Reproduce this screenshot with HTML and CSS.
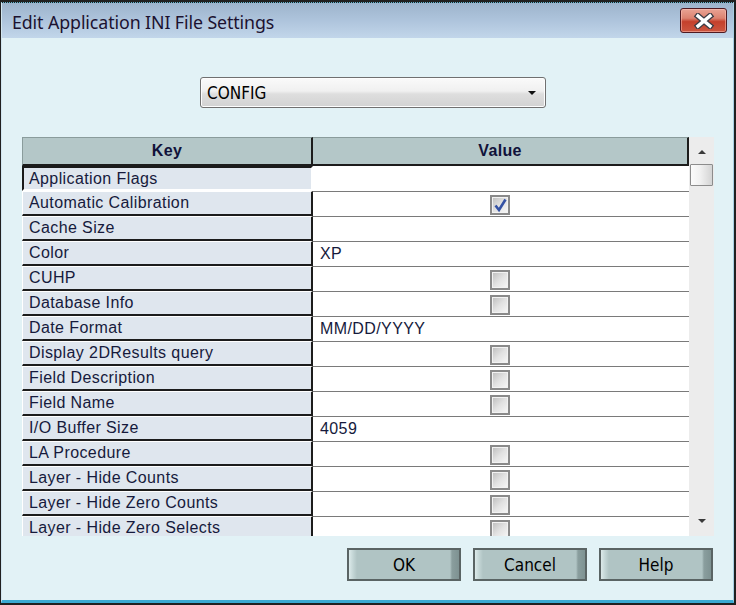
FILE: index.html
```html
<!DOCTYPE html>
<html>
<head>
<meta charset="utf-8">
<title>Edit Application INI File Settings</title>
<link rel="stylesheet" href="styles.css">
</head>
<body>
<div class="window">
  <div class="frame">
    <div class="titlebar">
      <span class="title">Edit Application INI File Settings</span>
      <div class="close">
        <svg width="22" height="16" viewBox="0 0 22 16">
          <path d="M5 3 L17 13 M17 3 L5 13" stroke="#3c3c44" stroke-width="6" stroke-linecap="square" fill="none"/>
          <path d="M5 3 L17 13 M17 3 L5 13" stroke="#ffffff" stroke-width="3.4" stroke-linecap="square" fill="none"/>
        </svg>
      </div>
    </div>
    <div class="client">
      <div class="combo-row">
        <div class="combo"><span class="combo-text">CONFIG</span><span class="combo-arrow"></span></div>
      </div>
      <div class="grid">
        <div class="grid-main">
          <div class="row head"><div class="k">Key</div><div class="v">Value</div></div>
          <div class="row first"><div class="k">Application Flags</div><div class="v"></div></div>
          <div class="row"><div class="k">Automatic Calibration</div><div class="v center"><span class="cb"><svg width="16" height="16" viewBox="0 0 16 16"><path d="M3.5 8.5 L7 13 L13.5 2.5" stroke="#3452a4" stroke-width="2.6" fill="none"/></svg></span></div></div>
          <div class="row"><div class="k">Cache Size</div><div class="v"></div></div>
          <div class="row"><div class="k">Color</div><div class="v">XP</div></div>
          <div class="row"><div class="k">CUHP</div><div class="v center"><span class="cb"></span></div></div>
          <div class="row"><div class="k">Database Info</div><div class="v center"><span class="cb"></span></div></div>
          <div class="row"><div class="k">Date Format</div><div class="v">MM/DD/YYYY</div></div>
          <div class="row"><div class="k">Display 2DResults query</div><div class="v center"><span class="cb"></span></div></div>
          <div class="row"><div class="k">Field Description</div><div class="v center"><span class="cb"></span></div></div>
          <div class="row"><div class="k">Field Name</div><div class="v center"><span class="cb"></span></div></div>
          <div class="row"><div class="k">I/O Buffer Size</div><div class="v">4059</div></div>
          <div class="row"><div class="k">LA Procedure</div><div class="v center"><span class="cb"></span></div></div>
          <div class="row"><div class="k">Layer - Hide Counts</div><div class="v center"><span class="cb"></span></div></div>
          <div class="row"><div class="k">Layer - Hide Zero Counts</div><div class="v center"><span class="cb"></span></div></div>
          <div class="row"><div class="k">Layer - Hide Zero Selects</div><div class="v center"><span class="cb"></span></div></div>
        </div>
        <div class="scrollbar">
          <div class="sb-btn"><span class="tri-up"></span></div>
          <div class="sb-thumb"></div>
          <div class="sb-track"></div>
          <div class="sb-btn bottom"><span class="tri-down"></span></div>
        </div>
      </div>
      <div class="buttons">
        <div class="btn">OK</div>
        <div class="btn">Cancel</div>
        <div class="btn">Help</div>
      </div>
    </div>
  </div>
</div>
</body>
</html>
```
FILE: styles.css
```css
html, body {
  margin: 0;
  padding: 0;
  background: #1e1e1e;
}
.window {
  width: 736px;
  height: 605px;
  box-sizing: border-box;
  padding: 2px 2px 2px 1px;
  background: #202020;
}
.frame {
  height: 100%;
  box-sizing: border-box;
  display: flex;
  flex-direction: column;
  border-left: 1px solid #d2e6f0;
  border-top: 1px dotted #62b8d2;
  border-right: 1px solid #a6cfe2;
  border-bottom: 3px solid #3aa9d2;
}
.titlebar {
  height: 35px;
  flex: none;
  display: flex;
  justify-content: space-between;
  align-items: flex-start;
  padding: 5px 6px 0 10px;
  box-sizing: border-box;
  background: linear-gradient(to bottom, #9db4cc 0%, #aec4dc 50%, #c2d6ea 100%);
}
.title {
  font-family: "Noto Sans", "Open Sans", sans-serif;
  font-size: 17.8px;
  line-height: 22px;
  padding-top: 3px;
  color: #1c1230;
  letter-spacing: -0.1px;
}
.close {
  width: 47px;
  height: 25px;
  box-sizing: border-box;
  border: 1px solid #4e1a22;
  border-radius: 3px;
  background: linear-gradient(to bottom, #e9a394 0%, #dc8270 40%, #c4402c 55%, #cc5640 100%);
  box-shadow: inset 0 0 0 1px rgba(255,200,190,0.5);
  display: flex;
  align-items: center;
  justify-content: center;
}
.close svg { display: block; }
.client {
  flex: 1;
  background: #e2f2f6;
  padding: 39px 19px 0 20px;
  display: flex;
  flex-direction: column;
}
.combo-row {
  display: flex;
  padding-left: 178px;
}
.combo {
  width: 346px;
  height: 31px;
  box-sizing: border-box;
  border: 1px solid #707070;
  border-radius: 3px;
  background: linear-gradient(to bottom, #fafafa 0%, #f0f0f0 45%, #dedede 55%, #d2d2d2 100%);
  box-shadow: inset 0 0 0 1px #fdfdfd;
  display: flex;
  align-items: center;
  justify-content: space-between;
  padding: 0 9px 0 6px;
}
.combo-text, .btn {
  font-family: "DejaVu Sans Condensed", "DejaVu Sans", sans-serif;
  font-stretch: condensed;
  font-size: 17px;
  color: #000;
}
.combo-arrow {
  width: 0;
  height: 0;
  border-left: 4px solid transparent;
  border-right: 4px solid transparent;
  border-top: 4px solid #111;
}
.grid {
  margin-top: 29px;
  height: 399px;
  display: flex;
  overflow: hidden;
  flex: none;
}
.grid-main {
  width: 667px;
  height: 399px;
  overflow: hidden;
  background: #ffffff;
}
.row {
  display: flex;
  height: 25px;
  font-family: "Liberation Sans", Arial, sans-serif;
  font-size: 16px;
  letter-spacing: 0.4px;
  color: #161a3c;
}
.row .k {
  width: 291px;
  box-sizing: border-box;
  background: #dfe6ee;
  border-top: 1px solid #ffffff;
  border-left: 1px solid #ffffff;
  border-right: 2px solid #1c1c1c;
  border-bottom: 2px solid #1c1c1c;
  padding-left: 6px;
  display: flex;
  align-items: center;
  white-space: nowrap;
}
.row .v {
  width: 376px;
  box-sizing: border-box;
  border-top: 1px solid #7a7a7a;
  padding-left: 7px;
  display: flex;
  align-items: center;
  white-space: nowrap;
}
.row .v.center {
  justify-content: center;
  align-items: flex-start;
  padding: 3px 2px 0 0;
}
.row.first .k {
  border-top: 2px solid #1a1a1a;
  border-left: 2px solid #1a1a1a;
  border-right: 2px solid #ffffff;
  border-bottom: 2px solid #ffffff;
  padding-left: 5px;
}
.row.first .v {
  border-top: none;
}
.row.head {
  height: 29px;
  font-weight: bold;
  font-size: 16px;
  letter-spacing: 0.3px;
  color: #10123a;
}
.row.head .k, .row.head .v {
  background: #b4c7c8;
  border-top: 1px solid #8a9c9c;
  border-bottom: 2px solid #1c1c1c;
  border-right: 2px solid #1c1c1c;
  justify-content: center;
  padding: 0;
}
.row.head .k {
  border-left: 1px solid #8a9c9c;
}
.cb {
  width: 20px;
  height: 20px;
  box-sizing: border-box;
  border: 2px solid #8a8a8a;
  box-shadow: inset 0 0 0 1px #f2f2f2;
  background: linear-gradient(135deg, #bcbcbc 0%, #e2e2e2 50%, #f8f8f8 100%);
  display: flex;
  align-items: center;
  justify-content: center;
}
.cb svg { display: block; }
.scrollbar {
  width: 25px;
  height: 399px;
  background: #ececec;
  display: flex;
  flex-direction: column;
  align-items: center;
}
.sb-btn {
  height: 27px;
  width: 100%;
  flex: none;
  display: flex;
  align-items: center;
  justify-content: center;
}
.sb-btn.bottom {
  height: 22px;
  align-items: flex-start;
  padding-top: 5px;
  box-sizing: border-box;
}
.tri-up {
  width: 0;
  height: 0;
  border-left: 4px solid transparent;
  border-right: 4px solid transparent;
  border-bottom: 4px solid #3a3a3a;
  margin-top: 2px;
}
.tri-down {
  width: 0;
  height: 0;
  border-left: 4px solid transparent;
  border-right: 4px solid transparent;
  border-top: 4px solid #3a3a3a;
}
.sb-thumb {
  width: 23px;
  height: 22px;
  flex: none;
  box-sizing: border-box;
  border: 1px solid #8c8c8c;
  border-radius: 1px;
  background: linear-gradient(to right, #fbfbfb 0%, #f0f0f0 45%, #d4d4d4 100%);
}
.sb-track {
  flex: 1;
}
.buttons {
  margin-top: 12px;
  margin-right: 1px;
  display: flex;
  justify-content: flex-end;
  gap: 12px;
}
.btn {
  width: 114px;
  height: 33px;
  box-sizing: border-box;
  border: 2px solid #5a6464;
  background: linear-gradient(to right, #dceaea 0px, #c4d6d6 4px, #b0c4c4 8px, #b0c4c4 calc(100% - 9px), #8a9e9e calc(100% - 7px), #7e9292 100%);
  display: flex;
  align-items: center;
  justify-content: center;
}
```
